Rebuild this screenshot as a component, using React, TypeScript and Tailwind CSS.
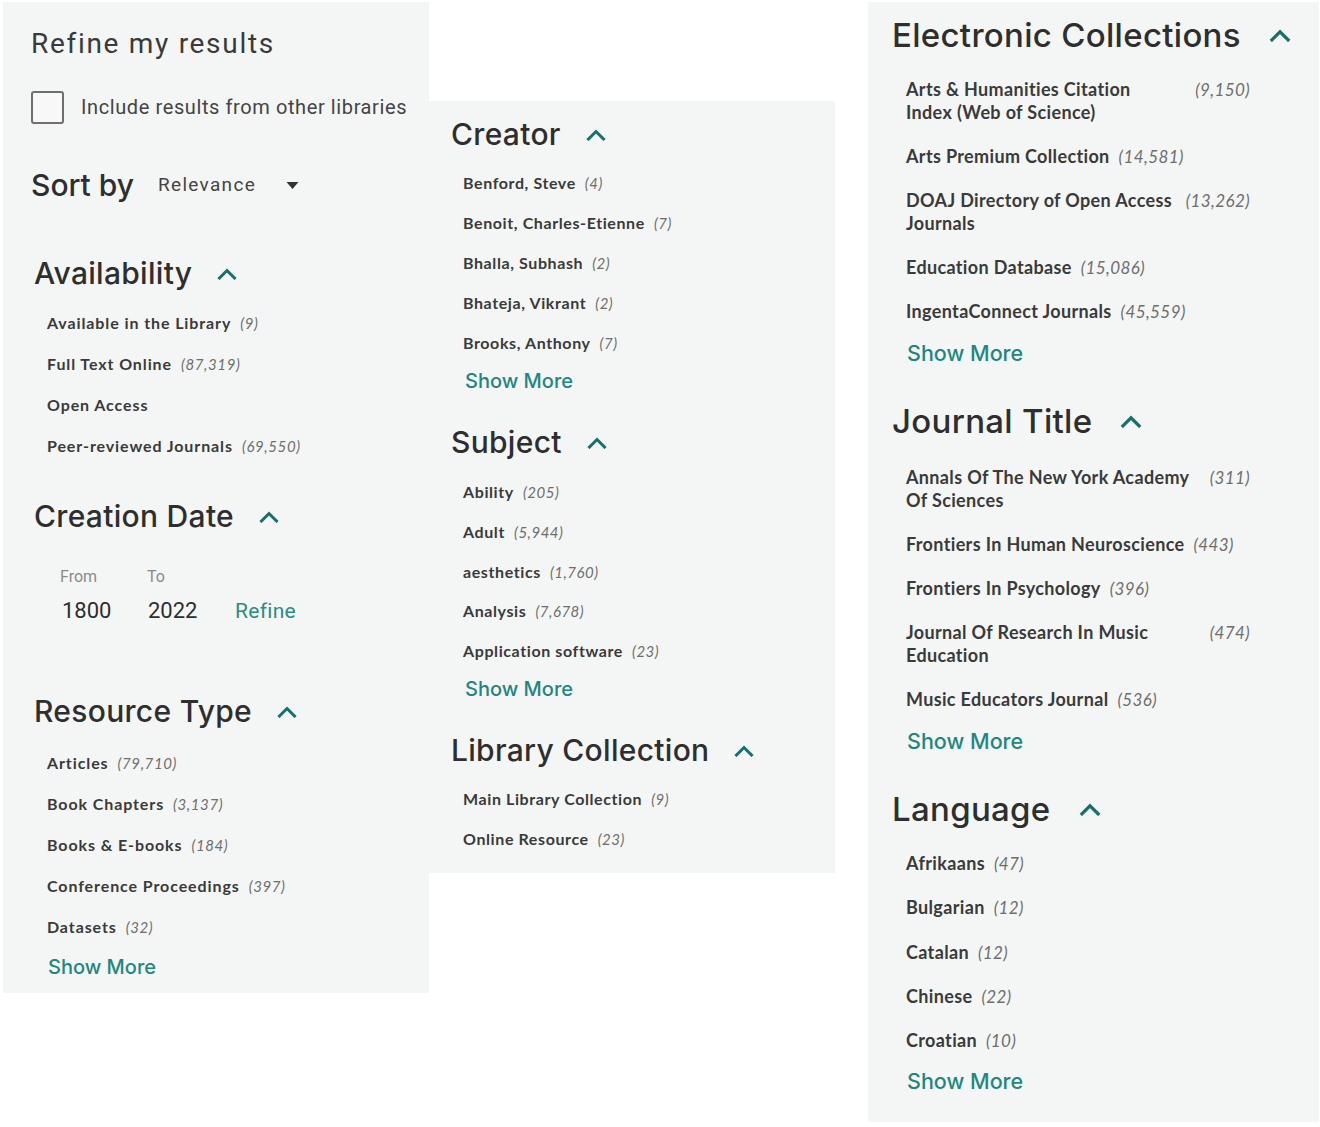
import React from "react";

type Facet = { label: string; count?: string; full?: boolean };

type Variant = {
  head: string;
  chev: string;
  list: string;
  item: string;
  count: string;
  more: string;
};

const small: Variant = {
  head: "text-[30px] leading-[36px] font-medium tracking-[0.3px] text-[#2e2e2e] font-['Inter',sans-serif]",
  chev: "ml-[25px] w-[20px] h-[13px]",
  list: "mt-[22px] ml-[13px] flex flex-col gap-[21px]",
  item: "text-[16px] leading-[20px] tracking-[0.9px]",
  count: "text-[15px] ml-[9px] tracking-[0.6px]",
  more: "mt-[17px] ml-[14px] text-[20px] leading-[24px]",
};

const middle: Variant = {
  ...small,
  item: "text-[16px] leading-[20px] tracking-[0.6px]",
  count: "text-[15px] ml-[9px] tracking-[0.5px]",
};

const large: Variant = {
  head: "text-[33px] leading-[40px] font-medium tracking-[0.3px] text-[#2e2e2e] font-['Inter',sans-serif]",
  chev: "ml-[28px] w-[22px] h-[14px]",
  list: "mt-[23px] ml-[14px] w-[344px] flex flex-col gap-[21px]",
  item: "text-[18px] leading-[23px] tracking-[0.35px]",
  count: "text-[17px] ml-[9px] tracking-[0.4px]",
  more: "mt-[17px] ml-[15px] text-[21.5px] leading-[26px]",
};

const ChevronUp = ({ className }: { className: string }) => (
  <svg viewBox="0 0 20 13" className={className} fill="none">
    <polyline points="2.5,11 10,3.5 17.5,11" stroke="#17706b" strokeWidth="3" strokeLinecap="square" />
  </svg>
);

const Heading = ({ title, v }: { title: string; v: Variant }) => (
  <div className="flex items-center">
    <h2 className={v.head}>{title}</h2>
    <ChevronUp className={v.chev} />
  </div>
);

const FacetList = ({ items, v, more = true }: { items: Facet[]; v: Variant; more?: boolean }) => (
  <>
    <ul className={v.list}>
      {items.map((it) => (
        <li key={it.label} className={"flex items-start font-['Lato',sans-serif] " + v.item}>
          <span className={it.full ? "flex-1 font-bold text-[#3a3a3a] whitespace-pre-line" : "font-bold text-[#3a3a3a]"}>
            {it.label}
          </span>
          {it.count && <span className={"italic text-[#6e6e6e] shrink-0 " + v.count}>({it.count})</span>}
        </li>
      ))}
    </ul>
    {more && (
      <button className={"block font-medium text-[#1f8780] font-['Inter',sans-serif] " + v.more}>Show More</button>
    )}
  </>
);

export default function App() {
  return (
    <div className="flex items-start w-[1320px] h-[1127px] bg-white overflow-hidden">
      {/* left column */}
      <aside className="ml-[3px] mt-[2px] w-[426px] h-[991px] bg-[#f4f6f5] pl-[28px] pt-[25px]">
        <h1 className="text-[28px] leading-[34px] text-[#3a3a3a] font-['Roboto',sans-serif] tracking-[1.7px]">
          Refine my results
        </h1>
        <label className="mt-[30px] flex items-center h-[32px]">
          <span className="block w-[33px] h-[33px] border-2 border-[#6f6f6f] rounded-[3px] bg-[#f7f8f7]" />
          <span className="ml-[17px] text-[20px] text-[#444] font-['Roboto',sans-serif] tracking-[0.6px]">
            Include results from other libraries
          </span>
        </label>
        <div className="mt-[44px] flex items-center h-[36px]">
          <span className="text-[30px] font-medium text-[#2e2e2e] font-['Inter',sans-serif]">Sort by</span>
          <span className="ml-[24px] text-[19px] text-[#444] font-['Roboto',sans-serif] tracking-[1.3px]">Relevance</span>
          <svg viewBox="0 0 12 7" className="ml-[30px] w-[13px] h-[7px]">
            <polygon points="0,0 12,0 6,7" fill="#333" />
          </svg>
        </div>

        <div className="mt-[52px] ml-[3px]">
          <Heading title="Availability" v={small} />
          <FacetList
            v={small}
            more={false}
            items={[
              { label: "Available in the Library", count: "9" },
              { label: "Full Text Online", count: "87,319" },
              { label: "Open Access" },
              { label: "Peer-reviewed Journals", count: "69,550" },
            ]}
          />
        </div>

        <div className="mt-[42px] ml-[3px]">
          <Heading title="Creation Date" v={small} />
          <div className="mt-[33px] ml-[26px] font-['Roboto',sans-serif]">
            <div className="flex text-[16px] leading-[20px] text-[#8a8a8a]">
              <span className="w-[87px]">From</span>
              <span>To</span>
            </div>
            <div className="mt-[10px] ml-[2px] flex items-center text-[22px] leading-[28px]">
              <span className="w-[86px] text-[#2e2e2e]">1800</span>
              <span className="w-[87px] text-[#2e2e2e]">2022</span>
              <span className="text-[#2b8c86] text-[21px] tracking-[0.3px]">Refine</span>
            </div>
          </div>
        </div>

        <div className="mt-[68px] ml-[3px]">
          <Heading title="Resource Type" v={small} />
          <FacetList
            v={{ ...small, list: "mt-[24px] ml-[13px] flex flex-col gap-[21px]", more: "mt-[18px] ml-[14px] text-[20px] leading-[24px]" }}
            items={[
              { label: "Articles", count: "79,710" },
              { label: "Book Chapters", count: "3,137" },
              { label: "Books & E-books", count: "184" },
              { label: "Conference Proceedings", count: "397" },
              { label: "Datasets", count: "32" },
            ]}
          />
        </div>
      </aside>

      {/* middle column */}
      <section className="mt-[101px] w-[406px] h-[772px] bg-[#f4f6f5] pl-[22px] pt-[15px]">
        <Heading title="Creator" v={middle} />
        <FacetList
          v={{ ...middle, list: "mt-[21px] ml-[12px] flex flex-col gap-[20px]", more: "mt-[16px] ml-[14px] text-[20px] leading-[24px]" }}
          items={[
            { label: "Benford, Steve", count: "4" },
            { label: "Benoit, Charles-Etienne", count: "7" },
            { label: "Bhalla, Subhash", count: "2" },
            { label: "Bhateja, Vikrant", count: "2" },
            { label: "Brooks, Anthony", count: "7" },
          ]}
        />
        <div className="mt-[31px]">
          <Heading title="Subject" v={middle} />
          <FacetList
            v={{ ...middle, list: "mt-[22px] ml-[12px] flex flex-col gap-[19.75px]", more: "mt-[16px] ml-[14px] text-[20px] leading-[24px]" }}
            items={[
              { label: "Ability", count: "205" },
              { label: "Adult", count: "5,944" },
              { label: "aesthetics", count: "1,760" },
              { label: "Analysis", count: "7,678" },
              { label: "Application software", count: "23" },
            ]}
          />
        </div>
        <div className="mt-[31px]">
          <Heading title="Library Collection" v={middle} />
          <FacetList
            v={{ ...middle, list: "mt-[21px] ml-[12px] flex flex-col gap-[20px]" }}
            more={false}
            items={[
              { label: "Main Library Collection", count: "9" },
              { label: "Online Resource", count: "23" },
            ]}
          />
        </div>
      </section>

      {/* right column */}
      <section className="ml-[33px] mt-[2px] w-[451px] h-[1120px] bg-[#f4f6f5] pl-[24px] pt-[13px]">
        <Heading title="Electronic Collections" v={large} />
        <FacetList
          v={large}
          items={[
            { label: "Arts & Humanities Citation\nIndex (Web of Science)", count: "9,150", full: true },
            { label: "Arts Premium Collection", count: "14,581" },
            { label: "DOAJ Directory of Open Access Journals", count: "13,262" },
            { label: "Education Database", count: "15,086" },
            { label: "IngentaConnect Journals", count: "45,559" },
          ]}
        />
        <div className="mt-[35px]">
          <Heading title="Journal Title" v={large} />
          <FacetList
            v={{ ...large, list: "mt-[25px] ml-[14px] w-[344px] flex flex-col gap-[21px]" }}
            items={[
              { label: "Annals Of The New York Academy Of Sciences", count: "311" },
              { label: "Frontiers In Human Neuroscience", count: "443" },
              { label: "Frontiers In Psychology", count: "396" },
              { label: "Journal Of Research In Music Education", count: "474" },
              { label: "Music Educators Journal", count: "536" },
            ]}
          />
        </div>
        <div className="mt-[35px]">
          <Heading title="Language" v={large} />
          <FacetList
            v={{ ...large, list: "mt-[23px] ml-[14px] w-[344px] flex flex-col gap-[21.25px]", more: "mt-[16px] ml-[15px] text-[21.5px] leading-[26px]" }}
            items={[
              { label: "Afrikaans", count: "47" },
              { label: "Bulgarian", count: "12" },
              { label: "Catalan", count: "12" },
              { label: "Chinese", count: "22" },
              { label: "Croatian", count: "10" },
            ]}
          />
        </div>
      </section>
    </div>
  );
}
